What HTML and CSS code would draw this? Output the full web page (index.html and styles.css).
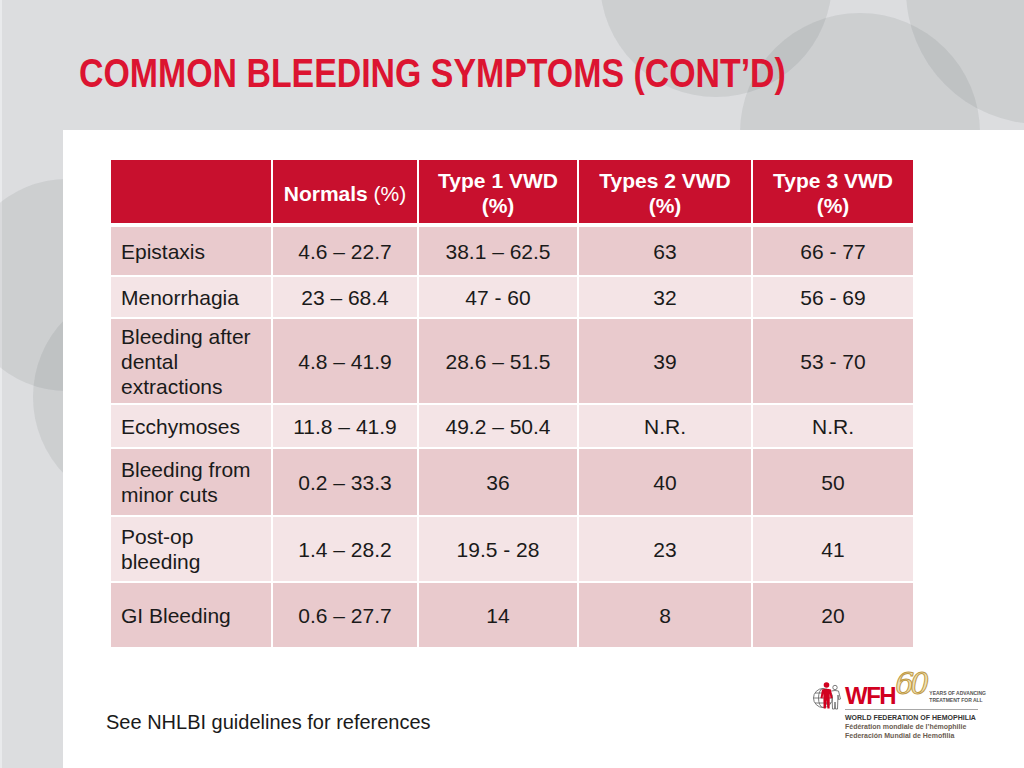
FILE: index.html
```html
<!DOCTYPE html>
<html lang="en">
<head>
<meta charset="utf-8">
<title>Common Bleeding Symptoms (cont'd)</title>
<link rel="stylesheet" href="styles.css">
</head>
<body>
<div class="slide">
  <div class="bg-circle circle-a"></div>
  <div class="bg-circle circle-b"></div>
  <div class="bg-circle circle-c"></div>
  <div class="bg-circle circle-l1"></div>
  <div class="bg-circle circle-l2"></div>

  <header class="title-bar">
    <h1 class="title">COMMON BLEEDING SYMPTOMS (CONT’D)</h1>
  </header>

  <main class="panel">
    <div class="grid">
      <div class="cell head"></div>
      <div class="cell head"><span>Normals <span class="thin">(%)</span></span></div>
      <div class="cell head"><span>Type 1 VWD<br>(%)</span></div>
      <div class="cell head"><span>Types 2 VWD<br>(%)</span></div>
      <div class="cell head"><span>Type 3 VWD<br>(%)</span></div>

      <div class="cell dark label">Epistaxis</div>
      <div class="cell dark">4.6 – 22.7</div>
      <div class="cell dark">38.1 – 62.5</div>
      <div class="cell dark">63</div>
      <div class="cell dark">66 - 77</div>

      <div class="cell light label">Menorrhagia</div>
      <div class="cell light">23 – 68.4</div>
      <div class="cell light">47 - 60</div>
      <div class="cell light">32</div>
      <div class="cell light">56 - 69</div>

      <div class="cell dark label">Bleeding after dental extractions</div>
      <div class="cell dark">4.8 – 41.9</div>
      <div class="cell dark">28.6 – 51.5</div>
      <div class="cell dark">39</div>
      <div class="cell dark">53 - 70</div>

      <div class="cell light label">Ecchymoses</div>
      <div class="cell light">11.8 – 41.9</div>
      <div class="cell light">49.2 – 50.4</div>
      <div class="cell light">N.R.</div>
      <div class="cell light">N.R.</div>

      <div class="cell dark label">Bleeding from minor cuts</div>
      <div class="cell dark">0.2 – 33.3</div>
      <div class="cell dark">36</div>
      <div class="cell dark">40</div>
      <div class="cell dark">50</div>

      <div class="cell light label">Post-op bleeding</div>
      <div class="cell light">1.4 – 28.2</div>
      <div class="cell light">19.5 - 28</div>
      <div class="cell light">23</div>
      <div class="cell light">41</div>

      <div class="cell dark label">GI Bleeding</div>
      <div class="cell dark">0.6 – 27.7</div>
      <div class="cell dark">14</div>
      <div class="cell dark">8</div>
      <div class="cell dark">20</div>
    </div>

    <footer class="foot">
      <p class="note">See NHLBI guidelines for references</p>
      <div class="logo">
        <svg class="logo-icon" width="30" height="30" viewBox="0 0 30 30" aria-hidden="true">
          <g fill="none" stroke="#6d6d6d" stroke-width="0.9">
            <circle cx="11" cy="17" r="9.5"/>
            <ellipse cx="11" cy="17" rx="4.5" ry="9.5"/>
            <line x1="1.5" y1="17" x2="20.5" y2="17"/>
            <path d="M3 12 H19 M3 22 H19"/>
            <circle cx="23" cy="6.5" r="2.2"/>
            <path d="M19.5 10 Q23 9 26.5 10 L28.5 18 L26.5 18.5 L26 14 L25.5 28 L23.5 28 L23 21 L22.5 28 L20.5 28 L20 14"/>
          </g>
          <circle cx="14.5" cy="4" r="2.8" fill="#d2001f"/>
          <path d="M10 8.5 Q14.5 7 19 8.5 L20.5 17 L18.5 17.5 L17.8 12.5 L17.6 27.5 L15.4 27.5 L14.6 19 L13.8 27.5 L11.6 27.5 L11.3 12.5 L10.5 17.5 L8.5 17 Z" fill="#d2001f"/>
        </svg>
        <div class="logo-main">
          <div class="logo-top">
            <span class="wfh">WFH</span>
            <span class="sixty">60</span>
            <span class="tagline">YEARS OF ADVANCING<br>TREATMENT FOR ALL</span>
          </div>
          <div class="logo-rule"></div>
          <p class="logo-en">WORLD FEDERATION OF HEMOPHILIA</p>
          <p class="logo-fr">Fédération mondiale de l’hémophilie</p>
          <p class="logo-es">Federación Mundial de Hemofilia</p>
        </div>
      </div>
    </footer>
  </main>
</div>
</body>
</html>
```
FILE: styles.css
```css
html, body {
  margin: 0;
  padding: 0;
}

body {
  font-family: "Liberation Sans", Arial, sans-serif;
  color: #1a1a1a;
  background: #dddee0;
}

.slide {
  position: relative;
  width: 1024px;
  height: 768px;
  overflow: hidden;
  background: #dcdddf;
  box-shadow: inset 2px 0 0 #e9eaec;
  display: flex;
  flex-direction: column;
}

/* decorative background circles */
.bg-circle {
  position: absolute;
  border-radius: 50%;
  background: rgba(60, 62, 66, 0.09);
}
.circle-a { left: 600px; top: -135px; width: 232px; height: 232px; }
.circle-b { left: 906px; top: -144px; width: 268px; height: 268px; }
.circle-c { left: 740px; top: 13px; width: 240px; height: 240px; }
.circle-l1 { left: -39px; top: 179px; width: 212px; height: 212px; }
.circle-l2 { left: 33px; top: 286px; width: 222px; height: 222px; }

/* title */
.title-bar {
  position: relative;
  z-index: 1;
  height: 130px;
  box-sizing: border-box;
  padding: 53px 0 0 79px;
}

.title {
  display: inline-block;
  margin: 0;
  font-family: "Liberation Sans", Arial, sans-serif;
  font-weight: bold;
  font-size: 41px;
  line-height: 1;
  color: #dc1431;
  white-space: nowrap;
  transform: scaleX(0.826);
  transform-origin: left center;
}

/* white content panel */
.panel {
  position: relative;
  z-index: 1;
  flex: 1;
  margin-left: 63px;
  background: #ffffff;
  display: flex;
  flex-direction: column;
}

.grid {
  display: grid;
  grid-template-columns: 160px 144px 158px 172px 160px;
  grid-template-rows: 65px 48px 40px 84px 42px 66px 64px 64px;
  column-gap: 2px;
  row-gap: 2px;
  width: 802px;
  margin: 30px 0 0 48px;
}

.cell {
  display: flex;
  align-items: center;
  justify-content: center;
  text-align: center;
  font-size: 21px;
  line-height: 25px;
  padding: 0 6px;
}

.head {
  margin-bottom: 2px;
  background: #c8102e;
  color: #ffffff;
  font-weight: bold;
  padding-top: 3px;
}

.thin {
  font-weight: normal;
}

.dark {
  background: #e9cacd;
}

.light {
  background: #f4e4e6;
}

.label {
  justify-content: flex-start;
  text-align: left;
  padding: 0 8px 0 10px;
}

/* footer */
.foot {
  display: flex;
  align-items: flex-start;
  margin-top: 20px;
}

.note {
  margin: 44px 0 0 43px;
  font-size: 20px;
  line-height: 23px;
  color: #1a1a1a;
}

.logo {
  margin-left: auto;
  margin-right: 46px;
  display: flex;
  align-items: flex-start;
  gap: 3px;
}

.logo-icon {
  margin-top: 14px;
}

.logo-main {
  display: flex;
  flex-direction: column;
  width: 133px;
}

.logo-top {
  display: flex;
  align-items: flex-end;
  height: 41px;
}

.wfh {
  font-family: "Liberation Sans", Arial, sans-serif;
  font-weight: bold;
  font-size: 24px;
  line-height: 20px;
  letter-spacing: -1.5px;
  color: #d2001f;
  padding-bottom: 2px;
}

.sixty {
  align-self: flex-start;
  margin: 2px 0 0 0;
  font-family: "DejaVu Serif", serif;
  font-style: italic;
  font-size: 30px;
  line-height: 30px;
  letter-spacing: -4px;
  color: #efe2b4;
  -webkit-text-stroke: 1px #bf9a45;
}

.tagline {
  margin: 0 0 4px 4px;
  font-size: 5px;
  line-height: 7px;
  font-weight: bold;
  color: #555555;
  white-space: nowrap;
}

.logo-rule {
  height: 1px;
  background: #a8a8a8;
  margin-top: 1px;
}

.logo-en, .logo-fr, .logo-es {
  margin: 0;
  font-size: 7px;
  line-height: 9px;
  font-weight: bold;
  white-space: nowrap;
}

.logo-en {
  margin-top: 3px;
  color: #333333;
}

.logo-fr, .logo-es {
  color: #6a5c50;
}
```
